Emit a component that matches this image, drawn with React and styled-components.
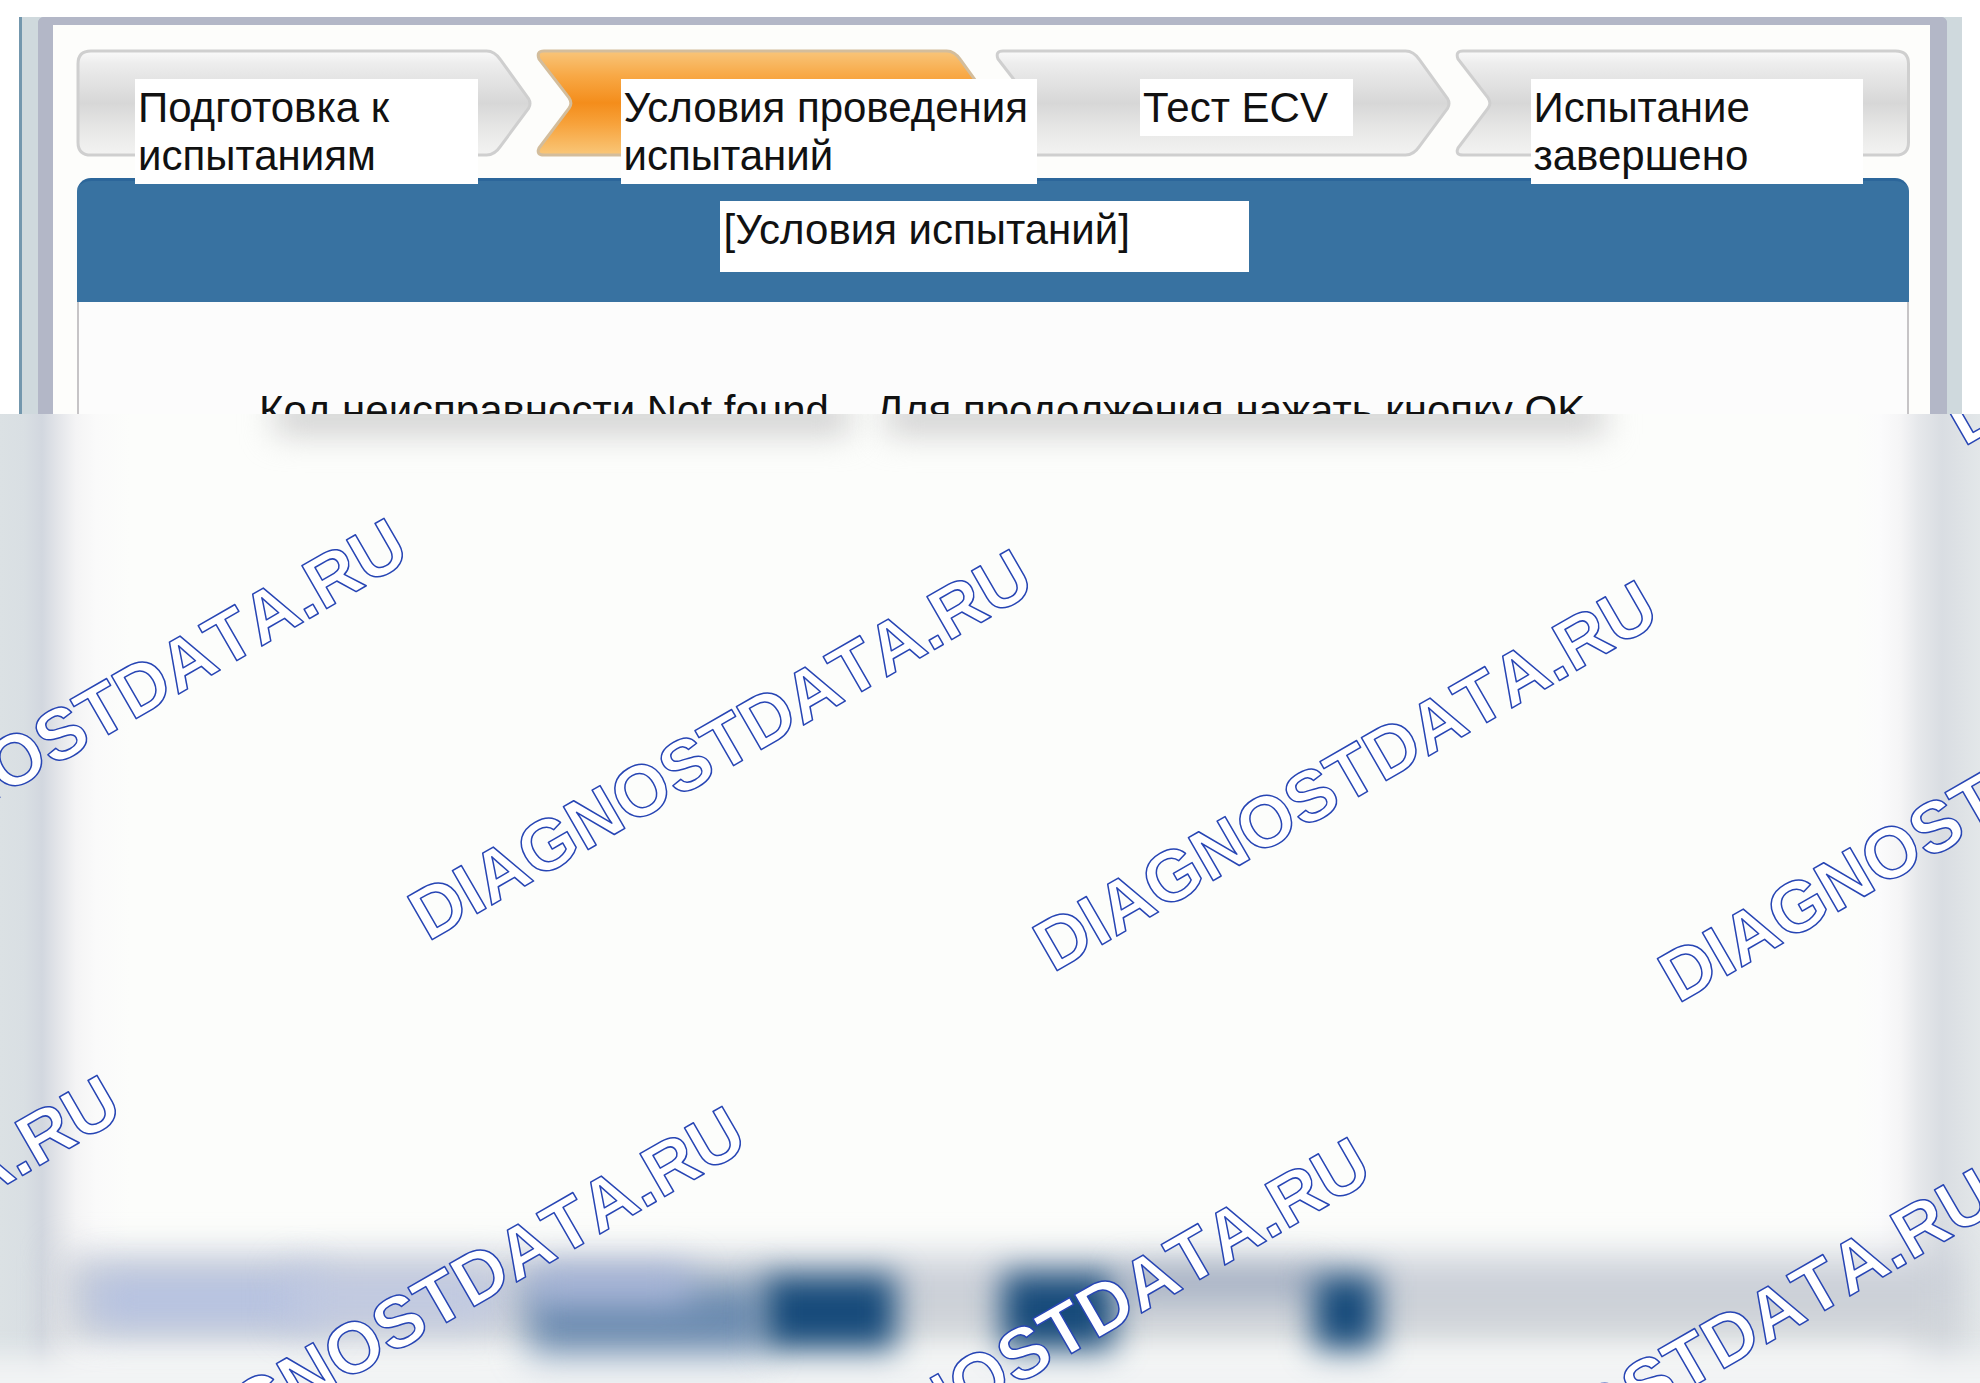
import React, {Component} from 'react';
import styled, {createGlobalStyle} from 'styled-components';

const GlobalStyle = createGlobalStyle`
    * { box-sizing: border-box; }
    body {
        margin: 0;
        background: #ffffff;
        color: #111111;
        font-family: "Liberation Sans", Arial, sans-serif;
        font-size: 42px;
        line-height: 48px;
    }
`
const Page = styled.main`
    position: relative;
    display: flex;
    flex-direction: column;
    min-height: 100vh;
    padding-top: 17px;
    overflow: hidden;
`
const Frame = styled.section`
    margin: 0 18px 0 19px;
    padding: 0 15px 0 16px;
    border-left: 3px solid #7397ad;
    background: #cfd9dd;
`
const FrameInner = styled.div`
    border: solid #b3b7c7;
    border-width: 8px 17px 0 15px;
    border-radius: 6px 6px 0 0;
    padding: 25px 21px 0 24px;
    background: #fdfdfb;
`
const Steps = styled.ol`
    display: grid;
    grid-template-columns: repeat(4, minmax(0, 1fr));
    grid-template-rows: 106px;
    column-gap: 6px;
    margin: 0 0 22px;
    padding: 0;
    list-style: none;
`
const StepItem = styled.li`
    position: relative;
    z-index: ${props => props.$active ? 2 : 1};
    padding: 29px 0 0 ${props => props.$indent}px;
`
const StepShape = styled.svg`
    position: absolute;
    inset: 0;
    width: 100%;
    height: 100%;
    overflow: visible;
`
const StepLabel = styled.span`
    position: relative;
    display: block;
    width: ${props => props.$width}px;
    min-height: 57px;
    padding: 5px 3px 4px;
    background: #ffffff;
`
const PanelHeader = styled.header`
    display: flex;
    justify-content: center;
    height: 124px;
    padding: 23px 18px 0 0;
    border-top: 3px solid #2c669a;
    border-radius: 14px 14px 0 0;
    background: #3872a1;
`
const PanelTitle = styled.h1`
    width: 529px;
    height: 71px;
    margin: -3px 0 0;
    padding: 5px 4px;
    background: #ffffff;
    font-size: 42px;
    font-weight: normal;
`
const PanelBody = styled.div`
    height: 112px;
    padding: 85px 0 0 180px;
    border: solid #c6c4c6;
    border-width: 0 2px;
    background: #fcfcfc;
    overflow: hidden;
`
const Message = styled.p`
    margin: 0;
    white-space: pre;
`
const Faded = styled.section`
    position: relative;
    flex: 1;
    min-height: 969px;
    overflow: hidden;
    background:
        linear-gradient(90deg, #dbe1e4 0, #d9dfe3 24px, #d2d7df 42px, #e3e5e9 58px, #f4f4f5 76px, #fafafa 96px, rgba(252,253,251,0) 130px),
        linear-gradient(270deg, #e3e7e9 0, #d9dde2 38px, #e6e8eb 62px, #f5f5f6 80px, #fbfbfc 100px, rgba(252,253,251,0) 124px),
        #fcfdfb;
`
const MessageShades = styled.div`
    display: flex;
    gap: 36px;
    padding: 0 19% 0 275px;
`
const Shade = styled.div`
    flex: ${props => props.$grow};
    height: 34px;
    margin-top: -14px;
    background: #cfcfcf;
    filter: blur(16px);
`
const BlurBar = styled.div`
    position: absolute;
    left: 60px;
    right: 24px;
    bottom: 37px;
    height: 90px;
    background: linear-gradient(#c9ced8, #d1d5d8);
    filter: blur(18px);
`
const BottomLight = styled.div`
    position: absolute;
    left: -40px;
    right: -40px;
    bottom: -40px;
    height: 68px;
    background: #f1f3f4;
    filter: blur(14px);
`
const Blob = styled.div`
    position: absolute;
    left: ${props => props.$left}px;
    bottom: ${props => props.$bottom}px;
    width: ${props => props.$width}px;
    height: ${props => props.$height}px;
    background: ${props => props.$color};
    filter: blur(${props => props.$blur || 16}px);
`
const Watermark = styled.svg`
    position: absolute;
    left: 0;
    top: 0;
    width: 100%;
    height: 100%;
    pointer-events: none;
    text {
        fill: #ffffff;
        stroke: #2745b4;
        stroke-width: 1.5px;
        stroke-linejoin: round;
        font-size: 72px;
        font-weight: bold;
        font-kerning: none;
    }
`

const steps = [
    {label: "Подготовка к испытаниям", indent: 58, width: 343, shape: "first"},
    {label: "Условия проведения испытаний", indent: 84, width: 416, shape: "middle", active: true},
    {label: "Тест ECV", indent: 144, width: 213, shape: "middle"},
    {label: "Испытание завершено", indent: 75, width: 332, shape: "last"}
]

const shapes = {
    first: "M14 1H411Q419 1 425 10L453 49Q456 54 453 59L425 97Q419 106 411 106H14Q1 106 1 93V14Q1 1 14 1Z",
    middle: "M7 1H411Q419 1 425 10L453 49Q456 54 453 59L425 97Q419 106 411 106H7Q-1 106 2 99L32 59Q36 54 32 48L2 9Q-1 1 7 1Z",
    last: "M7 1H441Q454 1 454 14V93Q454 106 441 106H7Q-1 106 2 99L32 59Q36 54 32 48L2 9Q-1 1 7 1Z"
}

const blobs = [
    {left: 90, bottom: 58, width: 230, height: 50, color: "#b3c0e2", blur: 20},
    {left: 290, bottom: 60, width: 210, height: 50, color: "#bfc8e2", blur: 20},
    {left: 528, bottom: 30, width: 236, height: 70, color: "#6b8bb0", blur: 18},
    {left: 530, bottom: 82, width: 160, height: 32, color: "#a9b6dc", blur: 18},
    {left: 764, bottom: 34, width: 132, height: 74, color: "#164a7a"},
    {left: 1002, bottom: 34, width: 112, height: 76, color: "#164a7a"},
    {left: 1124, bottom: 88, width: 196, height: 26, color: "#9daabf", blur: 16},
    {left: 1314, bottom: 34, width: 64, height: 74, color: "#164a7a"}
]

// left end of each baseline, measured from the top of the faded part
const marks = [
    [1339, 2], [1964, 33],
    [-197, 497], [428, 528], [1053, 559], [1678, 590],
    [-484, 1054], [141, 1085], [766, 1116], [1391, 1147]
]

class App extends Component {
    renderShape(step, index){
        const id = "stepFill" + index;
        return (
            <StepShape viewBox="0 0 455 107" preserveAspectRatio="none" aria-hidden="true">
                <defs>
                    {step.active ?
                        <linearGradient id={id} x1="0" y1="0" x2="0" y2="1">
                            <stop offset="0" stopColor="#f8c57a" />
                            <stop offset="0.24" stopColor="#f8a845" />
                            <stop offset="0.5" stopColor="#f48d1b" />
                            <stop offset="0.7" stopColor="#f7a23b" />
                            <stop offset="1" stopColor="#f9c779" />
                        </linearGradient> :
                        <linearGradient id={id} x1="0" y1="0" x2="0" y2="1">
                            <stop offset="0" stopColor="#fafafa" />
                            <stop offset="0.12" stopColor="#ededed" />
                            <stop offset="0.5" stopColor="#d7d7d7" />
                            <stop offset="0.75" stopColor="#e7e7e6" />
                            <stop offset="1" stopColor="#f3f3f2" />
                        </linearGradient>}
                </defs>
                <path d={shapes[step.shape]} fill={"url(#" + id + ")"} stroke={step.active ? "#d3bd9c" : "#cfcfcf"} strokeWidth="3" />
            </StepShape>
        );
    }

    render(){
        return (
            <Page>
                <GlobalStyle />
                <Frame>
                    <FrameInner>
                        <Steps>
                            {steps.map((step, index) => (
                                <StepItem
                                    key={step.label}
                                    $indent={step.indent}
                                    $active={step.active}
                                    aria-current={step.active ? "step" : undefined}
                                >
                                    {this.renderShape(step, index)}
                                    <StepLabel $width={step.width}>{step.label}</StepLabel>
                                </StepItem>
                            ))}
                        </Steps>
                        <PanelHeader>
                            <PanelTitle>[Условия испытаний]</PanelTitle>
                        </PanelHeader>
                        <PanelBody>
                            <Message>{"Код неисправности Not found.   Для продолжения нажать кнопку OK."}</Message>
                        </PanelBody>
                    </FrameInner>
                </Frame>
                <Faded>
                    <MessageShades>
                        <Shade $grow={4} />
                        <Shade $grow={5} />
                    </MessageShades>
                    <BlurBar />
                    <BottomLight />
                    {blobs.map((blob, index) => (
                        <Blob
                            key={index}
                            $left={blob.left}
                            $bottom={blob.bottom}
                            $width={blob.width}
                            $height={blob.height}
                            $color={blob.color}
                            $blur={blob.blur}
                        />
                    ))}
                    <Watermark aria-hidden="true">
                        {marks.map(([x, y]) => (
                            <text key={x} transform={`translate(${x} ${y}) rotate(-30)`}>DIAGNOSTDATA.RU</text>
                        ))}
                    </Watermark>
                </Faded>
            </Page>
        );
    }
}

export default App;
